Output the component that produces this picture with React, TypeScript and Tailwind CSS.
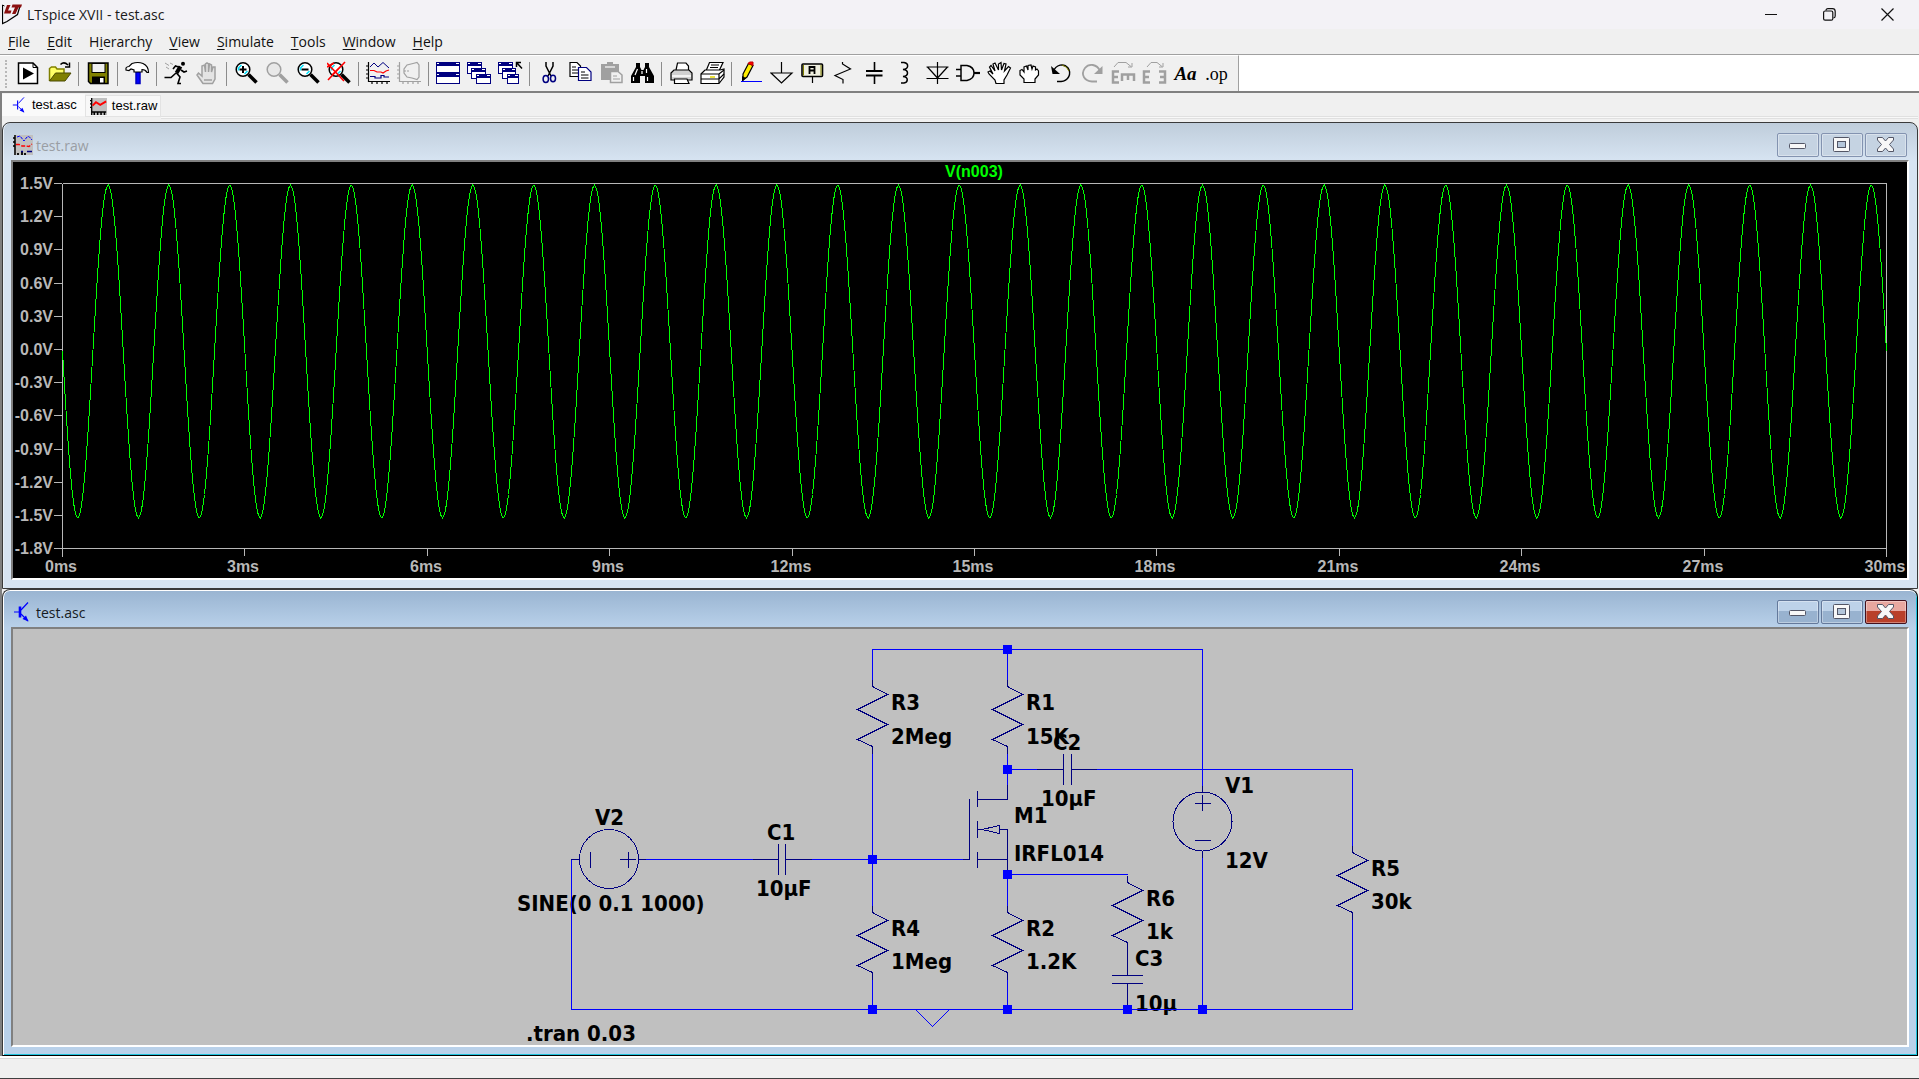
import type { ReactNode } from 'react';

const NAVY = '#000080';
const WIRE = '#0000ff';
const GRAY = '#a0a0a0';

function Icon({ children }: { children: ReactNode }) {
  return (
    <svg width="25" height="25" viewBox="0 0 25 25" fill="none" stroke="#000" strokeWidth="1.5" aria-hidden="true">
      {children}
    </svg>
  );
}

function Magnifier({ color = '#000', glass = '#fff', children }: { color?: string; glass?: string; children?: ReactNode }) {
  return (
    <Icon>
      <circle cx="9" cy="8.5" r="6.8" fill={glass} stroke={color} />
      {color === '#000' && <path d="M4.5 9.5V7L7.500 4M10.500 13L13.500 10" stroke="#00e5ff" />}
      <path d="M14.500 13.500L22.500 21.500" stroke={color} strokeWidth="3.5" />
      {children}
    </Icon>
  );
}

function MiniWindow({ x, y, w, h }: { x: number; y: number; w: number; h: number }) {
  return (
    <g shapeRendering="crispEdges">
      <rect x={x + 0.5} y={y + 0.5} width={w - 1} height={h - 1} fill="#fff" stroke={NAVY} strokeWidth="1" />
      <rect x={x} y={y} width={w} height="4" fill={NAVY} stroke="none" />
      <path d={`M${x + 1} ${y + 1.5}h2M${x + w - 4} ${y + 1.5}h3`} stroke="#fff" strokeWidth="1" />
    </g>
  );
}

const icons: Record<string, ReactNode> = {
  new: (
    <Icon>
      <path d="M2.500 2H17L21.500 6.500V22.500H2.500Z" fill="#fff" />
      <path d="M17 2V6.500H21.500" strokeWidth="1" />
      <path d="M7 6.500L18 12.500L7 18.500Z" fill="#000" stroke="none" />
    </Icon>
  ),
  open: (
    <Icon>
      <path d="M2.500 20V7.500L4.500 6H8.500L10 8H17V12" fill="#ffff66" stroke="#808000" />
      <path d="M2.500 20L8.500 12H24L18 20Z" fill="#808000" stroke="#4a4a00" strokeWidth="1" />
      <path d="M13.500 3.500Q17 0 21 4M22.500 1.500V6H18" />
    </Icon>
  ),
  save: (
    <Icon>
      <path d="M2.500 2H22V22.500H4.500L2.500 20.500Z" fill="#808000" />
      <rect x="6" y="2.500" width="13" height="9" fill="#f0f0f0" strokeWidth="1" />
      <rect x="6" y="15.500" width="13" height="6.500" fill="#000" stroke="none" />
      <rect x="14" y="17" width="3.500" height="4.500" fill="#fff" stroke="none" />
    </Icon>
  ),
  hammer: (
    <Icon>
      <path d="M11 10V22.500H15V10Z" fill="#0000ff" stroke="#0000c0" />
      <path d="M1 7Q2 5.500 4 5.500L7 2.500Q13 0.500 18 2.500Q23.500 5 23.500 11.500H22Q20.500 8.500 17 8.500V11H9V9L6 8L4 9.500L1 9Z" fill="#fff" strokeWidth="1.200" />
    </Icon>
  ),
  run: (
    <Icon>
      <circle cx="19" cy="2.800" r="2" fill="#000" stroke="none" />
      <path d="M16.500 5.500L12.500 12" strokeWidth="4" />
      <path d="M16 6.500L11.500 5L9 8M17 9L20 11L23 10M12 12L7 16.500H0.500M12.500 12L16 16L14 22.500H17" strokeWidth="1.600" />
      <path d="M1 2L5 4.500M6 2L9 3.500M2 6L5 8" stroke={GRAY} strokeWidth="1" />
    </Icon>
  ),
  halt: (
    <Icon>
      <path d="M8 22.500L2 14L3.500 12L7 15V5L9.500 4L10.500 11V3L12 2L13.500 3V11L14.500 3L16.500 4V11L18 6H20V18L17.500 22.500Z" stroke={GRAY} fill="#e4e4e4" />
      <path d="M9 19H17" stroke={GRAY} />
    </Icon>
  ),
  zoomIn: (
    <Magnifier>
      <path d="M5.500 8.500H12.500M9 5V12" strokeWidth="2" />
    </Magnifier>
  ),
  zoomArea: <Magnifier color={GRAY} glass="#e8e8e8" />,
  zoomOut: (
    <Magnifier>
      <path d="M5.500 8.500H12.500" strokeWidth="2" />
    </Magnifier>
  ),
  zoomFit: (
    <Magnifier>
      <path d="M0 2L17 20M18 1L1 19M0 6L7 2M5 14L14 5" stroke="#ff0000" strokeWidth="1.600" />
    </Magnifier>
  ),
  plot: (
    <Icon>
      <path d="M2.500 1V20.500H24M0 5H2M0 9H2M0 13H2M0 17H2M6 20V23M11 20V23M16 20V23M21 20V23" strokeWidth="1.200" />
      <path d="M4 6L8 2L12 6L17 1.500L23 7" stroke={NAVY} strokeWidth="1" />
      <path d="M4 9.500H8L11 11H15L17 12L20 10L23 9" stroke="#ff0000" strokeWidth="1.200" />
      <path d="M4 15.500H9V17H15V14.500H18V16H23" stroke={NAVY} strokeWidth="1.200" />
    </Icon>
  ),
  plotOff: (
    <Icon>
      <g stroke={GRAY} strokeWidth="1.200">
        <path d="M2.500 1V20.500H24M0 5H2M0 9H2M0 13H2M0 17H2M6 20V23M11 20V23M16 20V23M21 20V23" />
        <path d="M16 2.500L20 1.500L22 4V16L20 18.500L15 17M16 2.500L10 4L7 8V12L10 16L15 17" />
        <path d="M7 10H12" strokeDasharray="2 1" />
      </g>
    </Icon>
  ),
  tile: (
    <Icon>
      <MiniWindow x={0} y={1} w={24} h={11} />
      <MiniWindow x={0} y={12} w={24} h={11} />
    </Icon>
  ),
  cascade: (
    <Icon>
      <MiniWindow x={0} y={1} w={15} h={12} />
      <MiniWindow x={4} y={7} w={15} h={11} />
      <MiniWindow x={9} y={13} w={15} h={10} />
    </Icon>
  ),
  closeAll: (
    <Icon>
      <MiniWindow x={0} y={1} w={15} h={12} />
      <MiniWindow x={4} y={7} w={14} h={11} />
      <MiniWindow x={9} y={13} w={12} h={10} />
      <path d="M18.500 6V1.500H23M19 2L24 7.500" />
    </Icon>
  ),
  cut: (
    <Icon>
      <path d="M9 1V5L14 15M16 1V5L11 15" />
      <ellipse cx="8.800" cy="18" rx="2.700" ry="3.500" stroke={NAVY} />
      <ellipse cx="16" cy="17.500" rx="2.500" ry="3.200" stroke={NAVY} />
    </Icon>
  ),
  copy: (
    <Icon>
      <path d="M2 1.500H9L12.500 5V15.500H2Z" fill="#fff" strokeWidth="1.200" />
      <path d="M4 6H8M4 9H10M4 12H10" strokeWidth="1" />
      <path d="M10.500 6.500H18.500L23 11V19.500H10.500Z" fill="#fff" stroke={NAVY} strokeWidth="1.200" />
      <path d="M13 11H17M13 14H20.500M13 17H20.500" strokeWidth="1" />
    </Icon>
  ),
  paste: (
    <Icon>
      <path d="M2 3H8V1H14V3H20V19H2Z" fill={GRAY} stroke="none" />
      <path d="M6 6H16" stroke="#e8e8e8" />
      <path d="M11.500 10.500H19L23 14V21.500H11.500Z" fill="#f0f0f0" stroke={GRAY} />
      <path d="M14 15H18M14 18H21" stroke={GRAY} strokeWidth="1" />
    </Icon>
  ),
  find: (
    <Icon>
      <path d="M6 2H10V6L11.500 9H13.500L15 6V2H19V6L24 15V22H15V15H10V22H1V15L6 6Z" fill="#000" stroke="none" />
      <path d="M7.500 8L5 14M16.500 8V12M3.500 16V20M17.500 16V20M12 10V13" stroke="#fff" strokeWidth="1.200" />
    </Icon>
  ),
  print: (
    <Icon>
      <path d="M7 9L8.500 2H17L19.500 5V9" fill="#fff" strokeWidth="1.200" />
      <path d="M2 12L5 9H20L23 12V19H2Z" fill="#d0d0d0" strokeWidth="1.200" />
      <path d="M3 15H22" stroke="#fff" />
      <path d="M5.500 18H18L20 22.500H5.500Z" fill="#fff" strokeWidth="1.200" />
    </Icon>
  ),
  setup: (
    <Icon>
      <path d="M6 10L9.500 1.500H23L19 10" fill="#fff" strokeWidth="1.200" />
      <path d="M11 4H19M10 6.500H18" strokeWidth="1" />
      <path d="M1 13L5 9H20L24 8V16L19 22.500H1Z" fill="#fff" strokeWidth="1.200" />
      <path d="M1 13H19L24 9M19 13V22M1 18H19L24 13" strokeWidth="1.200" />
      <path d="M10 16H15" stroke="#e5d800" />
    </Icon>
  ),
  wire: (
    <Icon>
      <path d="M4 13L9.500 2.500L14 4.500L8 16L4 19Z" fill="#ffee00" strokeWidth="1.200" />
      <path d="M9 2.500L10.500 1H14V4.500Z" fill="#ff0000" stroke="#c00000" strokeWidth="1" />
      <path d="M3 15V21L7 17Z" fill="#000" stroke="none" />
      <path d="M2 20.500H23" stroke={WIRE} strokeWidth="1" />
    </Icon>
  ),
  ground: (
    <Icon>
      <path d="M11.500 1V11.500M1 12H22L11.500 22Z" strokeWidth="1.200" />
    </Icon>
  ),
  label: (
    <Icon>
      <rect x="1" y="3" width="20.500" height="12.500" rx="1" fill="#f0f0e0" strokeWidth="1.600" />
      <path d="M2.500 4V14.500M20 4V14.500" stroke="#808000" strokeWidth="1" />
      <path d="M8.500 13V6H13.500V13M8.500 9.500H13.500" strokeWidth="1.800" />
      <path d="M11.500 16V22" strokeWidth="1.200" />
    </Icon>
  ),
  resistor: (
    <Icon>
      <path d="M10.500 1V3L18.500 8L3 14.500L11 18.500V22.500" strokeWidth="1.200" />
    </Icon>
  ),
  capacitor: (
    <Icon>
      <path d="M11.500 1V10M11.500 14.500V23" strokeWidth="1.600" />
      <path d="M3 10H19.500M3 14.500H19.500" strokeWidth="2" />
    </Icon>
  ),
  inductor: (
    <Icon>
      <path d="M7 1.500H10C15 2.500 15 8 9 8.500C15 9 15 15 9 15.500C15 16 14 21.500 10 22H7" />
    </Icon>
  ),
  diode: (
    <Icon>
      <path d="M12.500 1V23M1.500 6H23.500M2.500 6L12.500 17L22.500 6M1.500 17.500H23.500" strokeWidth="1.200" />
    </Icon>
  ),
  gate: (
    <Icon>
      <path d="M5 4.500H11Q18 6 18 12Q18 18 11 19.500H5ZM0 8.500H5M0 15H5" />
      <path d="M18 12H24" strokeWidth="2.200" />
    </Icon>
  ),
  move: (
    <Icon>
      <path d="M9 22.500L8 19L2 13L1 11L3 10L6 13L2.500 6L4 4.500L8 10L6 3L8 2L11.500 9V3L14 1.500L14.500 9L17 2.500L19 3L17.500 10L21.500 5.500L23.500 7L20 14L17 19V22.500Z" fill="#fff" strokeWidth="1.200" />
    </Icon>
  ),
  drag: (
    <Icon>
      <path d="M6 21.500V18L2 14V9.500L4 8.500L6 11V6L8.500 5L10 9V4.500L13 4L14 8L15 5L17.500 6V9L19 8L20.500 10V14L17 18V21.500Z" fill="#fff" strokeWidth="1.200" />
    </Icon>
  ),
  undo: (
    <Icon>
      <path d="M4 11C7 3 15 2 19 7C23 13 19 20 12 20.500H8" />
      <path d="M2 5L3.500 13H11Z" fill="#000" stroke="none" />
      <path d="M13 4Q18 5 20 10" stroke="#808000" strokeWidth="1" />
    </Icon>
  ),
  redo: (
    <Icon>
      <path d="M20 10C17 3 9 2 5 7C0 14 5 20 12 20.500H17" stroke={GRAY} strokeWidth="1.800" />
      <path d="M22.500 5V13H14Z" fill={GRAY} stroke="none" />
    </Icon>
  ),
  rotate: (
    <Icon>
      <path d="M8 10.500H2V21.500H8M2 16H7" stroke={GRAY} strokeWidth="2.500" />
      <path d="M11 20V13.500H23V20M17 14V19" stroke={GRAY} strokeWidth="2.500" />
      <path d="M3 6L7 1.500H15L20 5.500M21 2V6H17" stroke={GRAY} strokeWidth="1" />
    </Icon>
  ),
  mirror: (
    <Icon>
      <path d="M8 10.500H2V21.500H8M2 16H7M17 10.500H23V21.500H17M18 16H23" stroke={GRAY} strokeWidth="2.500" />
      <path d="M5 6L9 1.500H15L20 5.500M21 2V6H17" stroke={GRAY} strokeWidth="1" />
    </Icon>
  ),
  text: <span className="font-['Liberation_Serif',serif] text-[19px] leading-6 font-bold italic">Aa</span>,
  directive: <span className="font-['Liberation_Serif',serif] text-[18px] leading-6">.op</span>,
};

const toolGroups: [string, string][][] = [
  [['new', 'New schematic'], ['open', 'Open']],
  [['save', 'Save']],
  [['hammer', 'Control panel']],
  [['run', 'Run'], ['halt', 'Halt']],
  [['zoomIn', 'Zoom in'], ['zoomArea', 'Pan'], ['zoomOut', 'Zoom out'], ['zoomFit', 'Zoom to fit']],
  [['plot', 'Autorange'], ['plotOff', 'Plot settings']],
  [['tile', 'Tile windows'], ['cascade', 'Cascade windows'], ['closeAll', 'Close all windows']],
  [['cut', 'Cut'], ['copy', 'Copy'], ['paste', 'Paste'], ['find', 'Find']],
  [['print', 'Print'], ['setup', 'Print setup']],
  [
    ['wire', 'Wire'], ['ground', 'Ground'], ['label', 'Label net'], ['resistor', 'Resistor'], ['capacitor', 'Capacitor'],
    ['inductor', 'Inductor'], ['diode', 'Diode'], ['gate', 'Component'], ['move', 'Move'], ['drag', 'Drag'], ['undo', 'Undo'],
    ['redo', 'Redo'], ['rotate', 'Rotate'], ['mirror', 'Mirror'], ['text', 'Text'], ['directive', 'SPICE directive'],
  ],
];

const menus: [string, string, string][] = [
  ['', 'F', 'ile'], ['', 'E', 'dit'], ['H', 'i', 'erarchy'], ['', 'V', 'iew'], ['', 'S', 'imulate'], ['', 'T', 'ools'], ['', 'W', 'indow'], ['', 'H', 'elp'],
];

function TransistorIcon({ tab = false }: { tab?: boolean }) {
  return (
    <svg width={tab ? 16 : 20} height={tab ? 16 : 20} viewBox="0 0 20 20" fill="none" stroke={WIRE} strokeWidth="1.2" aria-hidden="true">
      <path d="M1 10H7M8 8L15 0.500M8 12L15 19" />
      <path d="M7 4.500V15.500" strokeWidth={tab ? 1.4 : 2.6} />
      <path d="M15.500 19.500L9.500 17L13 13.500Z" fill={WIRE} stroke="none" />
    </svg>
  );
}

function WaveIcon({ tab = false }: { tab?: boolean }) {
  return (
    <svg width={tab ? 17 : 20} height={tab ? 17 : 20} viewBox="0 0 20 20" fill="none" aria-hidden="true">
      <rect x="1" width="19" height="20" fill="#c0c0c0" />
      <path d="M2 0V20M0 3H2M0 7H2M0 11H2" stroke="#000" strokeWidth="1.500" />
      <path d={tab ? 'M2 16.500H19M5 16V20M9 16V20M13 16V20M17 16V20' : 'M5 18V20M9 17V20M12 18V20'} stroke="#000" strokeWidth="1.800" />
      {tab ? (
        <path d="M3 9L7 5L12 8L19 4" stroke="#ff0000" strokeWidth="2.200" />
      ) : (
        <>
          <path d="M4 2L7 1L11 6L14 2L16 1.500L19 5" stroke="#0000ff" strokeDasharray="3 1" />
          <path d="M3 9.500H6L9 11H13L16 11.500L19 9" stroke="#ff0000" strokeWidth="1.300" strokeDasharray="4 1.500" />
          <path d="M8 16.500H10M14 16.500H19" stroke={NAVY} strokeWidth="1.300" />
        </>
      )}
    </svg>
  );
}

function CaptionButton({ kind, active }: { kind: 'min' | 'max' | 'close'; active: boolean }) {
  const red = active && kind === 'close';
  const skin = red
    ? 'border-[#43101c] bg-linear-to-b from-[#e8a79f] from-45% to-[#b9402a] to-45%'
    : active
      ? 'border-[#64799b] bg-linear-to-b from-[#bdd2e9] from-45% to-[#98b2cf] to-45%'
      : 'border-[#8393b0] bg-[#c5d3e2]';
  return (
    <button type="button" aria-label={kind} className={`flex h-6 w-[42px] items-center justify-center rounded-xs border shadow-[inset_0_0_0_1px_rgba(255,255,255,0.35)] ${skin}`}>
      <svg width="20" height="18" viewBox="0 0 20 18" fill="none" aria-hidden="true">
        {kind === 'min' && <rect x="1.500" y="7.500" width="16" height="5" rx="1" fill="#f8f8f8" stroke="#535666" />}
        {kind === 'max' && (
          <>
            <rect x="1.500" y="1.500" width="16" height="14" rx="1" fill="#f8f8f8" stroke="#535666" />
            <rect x="5.500" y="5.500" width="8" height="6" fill="#b4c6da" stroke="#535666" />
          </>
        )}
        {kind === 'close' && (
          <path d="M1.500 1.500H6.500L9.500 5L12.500 1.500H17.500V4L13.500 8.500L17.500 13V15.500H12.500L9.500 12L6.500 15.500H1.500V13L5.500 8.500L1.500 4Z" fill="#f8f8f8" stroke="#535666" strokeLinejoin="round" />
        )}
      </svg>
    </button>
  );
}

function MdiWindow({ title, icon, active, children }: { title: string; icon: ReactNode; active: boolean; children: ReactNode }) {
  return (
    <section
      className={`flex min-h-0 flex-1 flex-col overflow-hidden rounded-t-lg border border-[#3a3a3a] px-2 pb-2 ${
        active
          ? 'border-r-black border-b-black bg-[#b9d1ea] bg-linear-to-b from-[#99b4d1] to-[#b9d1ea] to-[38px] shadow-[inset_0_1px_0_#fff,inset_1px_0_0_#fff,inset_-1px_-1px_0_#1fc3dd]'
          : 'bg-[#d7e4f2] bg-linear-to-b from-[#bfcddb] to-[#d7e4f2] to-[38px] shadow-[inset_1px_0_0_#e8f0f8]'
      }`}
    >
      <header className="flex h-[37px] shrink-0 items-start justify-between pt-[10px] pr-[2px] pl-[2px]">
        <div className="flex h-6 items-center gap-[3px]">
          {icon}
          <h2 className={`pt-px font-['Open_Sans',sans-serif] text-[14px] leading-5 ${active ? 'text-[#151b24]' : 'text-[#9a9ea4]'}`}>{title}</h2>
        </div>
        <div className="flex gap-[2px]">
          <CaptionButton kind="min" active={active} />
          <CaptionButton kind="max" active={active} />
          <CaptionButton kind="close" active={active} />
        </div>
      </header>
      <div className="min-h-0 flex-1 border-2 border-t-[#808080] border-r-white border-b-white border-l-[#808080]">{children}</div>
    </section>
  );
}

const volts = ['1.5V', '1.2V', '0.9V', '0.6V', '0.3V', '0.0V', '-0.3V', '-0.6V', '-0.9V', '-1.2V', '-1.5V', '-1.8V'];
const times = ['0ms', '3ms', '6ms', '9ms', '12ms', '15ms', '18ms', '21ms', '24ms', '27ms', '30ms'];
const trace = Array.from({ length: 913 }, (_, i) => {
  const x = i * 2;
  return `${x + 62.5},${(351.5 + 166.5 * Math.sin((x / 60.8) * 2 * Math.PI)).toFixed(1)}`;
}).join(' ');

function Waveform() {
  return (
    <svg className="block h-full w-full bg-black font-['Liberation_Sans',Arial,sans-serif] text-[16px] font-bold" viewBox="13 162 1894 416" role="img" aria-label="V(n003) waveform">
      <g stroke="#b8b8b8" fill="none" shapeRendering="crispEdges">
        <path d="M62.500 183.500H1886.500V556.500M62.500 183.500V556.500M62.500 548.500H1886.500" />
        {volts.map((v, i) => (
          <path key={v} d={`M54 ${Math.round(183 + i * 33.2) + 0.5}H62`} />
        ))}
        {times.map((t, i) => (
          <path key={t} d={`M${Math.round(62 + i * 182.4) + 0.5} 548V556`} />
        ))}
      </g>
      <g fill="#b8b8b8">
        {volts.map((v, i) => (
          <text key={v} x="53" y={Math.round(189 + i * 33.2)} textAnchor="end">{v}</text>
        ))}
        {times.map((t, i) => (
          <text key={t} x={Math.round(61 + i * 182.4)} y="572" textAnchor="middle">{t}</text>
        ))}
      </g>
      <text x="974" y="177" textAnchor="middle" fill="#00ff00">V(n003)</text>
      <polyline points={trace} fill="none" stroke="#00ff00" shapeRendering="crispEdges" />
    </svg>
  );
}

const resistors: [number, number][] = [[872.5, 686.5], [1007.5, 686.5], [872.5, 912.5], [1007.5, 912.5], [1127.5, 882.5], [1352.5, 852.5]];
const nodes: [number, number][] = [[1007, 649], [1007, 769], [872, 859], [1007, 874], [872, 1009], [1007, 1009], [1127, 1009], [1202, 1009]];
const labels: [number, number, string][] = [
  [891, 710, 'R3'], [891, 744, '2Meg'], [1026, 710, 'R1'], [1026, 744, '15K'], [1053, 750, 'C2'], [1041, 806, '10µF'],
  [1014, 823, 'M1'], [1014, 861, 'IRFL014'], [1225, 793, 'V1'], [1225, 868, '12V'], [595, 825, 'V2'], [767, 840, 'C1'],
  [756, 896, '10µF'], [517, 911, 'SINE(0 0.1 1000)'], [526, 1041, '.tran 0.03'], [891, 936, 'R4'], [891, 969, '1Meg'],
  [1026, 936, 'R2'], [1026, 969, '1.2K'], [1146, 906, 'R6'], [1146, 939, '1k'], [1135, 966, 'C3'], [1135, 1011, '10µ'],
  [1371, 876, 'R5'], [1371, 909, '30k'],
];

function Schematic() {
  return (
    <svg className="block h-full w-full bg-[#c0c0c0] font-['DejaVu_Sans_Condensed','Noto_Sans',sans-serif] text-[22px] font-bold" viewBox="13 629 1894 416" role="img" aria-label="Amplifier schematic">
      <g fill="#000">
        {labels.map(([x, y, t]) => (
          <text key={`${x}-${y}`} x={x} y={y}>{t}</text>
        ))}
      </g>
      <g fill="none" stroke={WIRE} shapeRendering="crispEdges">
        <path d="M872.500 681V649.500H1202.500V786M1007.500 649.500V681M872.500 753V907M1007.500 753V785M1007.500 769.500H1037M1097 769.500H1352.500V846" />
        <path d="M646 859.500H753M812 859.500H963M579 859.500H571.500V1009.500H1352.500V919M1202.500 858V1009.500" />
        <path d="M1007.500 874.500H1127.500M1007.500 874.500V907M872.500 978V1009.500M1007.500 978V1009.500" />
        <path d="M916 1010L932.500 1026.500L949 1010" />
      </g>
      <g fill="none" stroke={NAVY} shapeRendering="crispEdges">
        {resistors.map(([x, y]) => (
          <path key={`${x}-${y}`} d={`M${x} ${y - 7}v7l15 8l-30 15l30 15l-30 15l15 7v7`} />
        ))}
        <path d="M1037 769.500H1063.500M1063.500 754V785M1071.500 754V785M1071.500 769.500H1097" />
        <path d="M753 859.500H778.500M778.500 844V875M785.500 844V875M785.500 859.500H812" />
        <path d="M1127.500 949V975.500M1112 975.500H1143M1112 983.500H1143M1127.500 983.500V1005" />
        <path d="M1007.500 785V799.500H977.500M977.500 791V807M963 859.500H969.500V799M977.500 821V838M977.500 852V868M977.500 859.500H1007.500" />
        <path d="M1007.500 870V829.500H999.500M978 829.500H982L999.500 825.500V833.500L982 829.500" />
        <circle cx="1202.500" cy="821.500" r="29.500" />
        <path d="M1202.500 786V792M1202.500 851V858M1195 803.500H1211M1202.500 795V811M1195 840.500H1211" />
        <circle cx="609" cy="859" r="29.500" />
        <path d="M571 859.500H579M638 859.500H646M590.500 852V868M620 859.500H636M628.500 852V868" />
      </g>
      <g fill={WIRE}>
        {nodes.map(([x, y]) => (
          <rect key={`${x}-${y}`} x={x - 4} y={y - 4} width="9" height="9" />
        ))}
      </g>
    </svg>
  );
}

export default function App() {
  return (
    <div className="flex h-screen w-full flex-col overflow-hidden bg-[#f0f0f0] text-black">
      <header className="flex h-[29px] shrink-0 items-center justify-between bg-[#f3f2f6] pr-[3px] pl-[2px]">
        <div className="flex items-center gap-1">
          <svg width="21" height="21" viewBox="0 0 21 21" fill="none" aria-hidden="true">
            <path d="M0.500 1V19.500L5 17.500L15.500 10.500L18 2" stroke="#000" strokeWidth="1.200" />
            <path d="M0.500 1L2.500 2" stroke="#000" />
            <path d="M5 1H8.500L6 6.500H9.500L8.500 9.500H2ZM10.500 0.500H20L19 3.500H16.500L13.500 10H10L13 3.500H9.500Z" fill="#8b1010" />
          </svg>
          <h1 className="font-['Open_Sans',sans-serif] text-[14px] leading-5 text-[#1a1a1a]">LTspice XVII - test.asc</h1>
        </div>
        <div className="flex">
          <button type="button" aria-label="Minimize" className="flex h-7 w-[58px] items-center justify-center">
            <svg width="13" height="13" viewBox="0 0 13 13" stroke="#111"><path d="M0 6.500H12" /></svg>
          </button>
          <button type="button" aria-label="Restore" className="flex h-7 w-[58px] items-center justify-center">
            <svg width="13" height="13" viewBox="0 0 13 13" fill="none" stroke="#111" strokeWidth="1.200">
              <rect x="0.600" y="3" width="9.200" height="9.200" rx="1.500" />
              <path d="M3 2.500Q3 0.700 5 0.700H9.500Q12.200 0.700 12.200 3.500V8Q12.200 9.800 10.500 9.800" />
            </svg>
          </button>
          <button type="button" aria-label="Close" className="flex h-7 w-[58px] items-center justify-center">
            <svg width="13" height="13" viewBox="0 0 13 13" stroke="#111" strokeWidth="1.200"><path d="M0.500 0.500L12.500 12.500M12.500 0.500L0.500 12.500" /></svg>
          </button>
        </div>
      </header>

      <nav className="flex h-[26px] shrink-0 gap-px border-b border-[#a0a0a0] font-['Open_Sans',sans-serif] text-[14px] leading-[25px]">
        {menus.map(([pre, key, post]) => (
          <button key={key + post} type="button" className="px-2 text-[#111]">
            {pre}
            <span className="underline decoration-1 underline-offset-2">{key}</span>
            {post}
          </button>
        ))}
      </nav>

      <div className="flex h-[38px] shrink-0 border-b-2 border-[#808080] bg-white">
        <div className="flex items-center border-t border-r border-t-white border-r-[#a0a0a0] bg-[#f0f0f0] pr-[6px] pl-[5px]">
          <div className="h-7 w-2 shrink-0 border-l-2 border-dotted border-[#b8b8b8]" />
          {toolGroups.map((group, gi) => (
            <div key={gi} className="flex items-center">
              {gi > 0 && <div className="mr-1 ml-[3px] h-6 w-px bg-[#8c8c8c]" />}
              {group.map(([id, name]) => (
                <button key={id} type="button" aria-label={name} className="flex h-8 w-[31px] items-center justify-center">
                  {icons[id]}
                </button>
              ))}
            </div>
          ))}
        </div>
      </div>

      <div className="flex min-h-0 flex-1 flex-col border-l-2 border-[#808080] pr-px">
        <div className="flex h-[29px] shrink-0 items-start pt-px font-['Liberation_Sans',Arial,sans-serif] text-[13px]" role="tablist">
          <button type="button" role="tab" aria-selected="true" className="flex h-[22px] items-center gap-1 bg-[#fafafa] pr-2 pl-[10px]">
            <TransistorIcon tab />
            test.asc
          </button>
          <button type="button" role="tab" aria-selected="false" className="mt-px flex h-[22px] items-center gap-[5px] border border-[#e3e3e3] bg-[#f8f8f8] pr-[3px] pl-1">
            <WaveIcon tab />
            test.raw
          </button>
          <div className="mt-[22px] h-[3px] flex-1 border-y border-[#e0e0e0] bg-[#f8f8f8]" />
        </div>

        <main className="flex min-h-0 flex-1 flex-col bg-[#f0f0f0]">
          <MdiWindow title="test.raw" icon={<WaveIcon />} active={false}>
            <Waveform />
          </MdiWindow>
          <MdiWindow title="test.asc" icon={<TransistorIcon />} active>
            <Schematic />
          </MdiWindow>
        </main>
      </div>

      <footer className="h-[23px] shrink-0 border-t-2 border-b border-t-white border-b-[#404040] bg-[#f0f0f0] shadow-[inset_0_1px_0_#d8d8d8]" />
    </div>
  );
}
